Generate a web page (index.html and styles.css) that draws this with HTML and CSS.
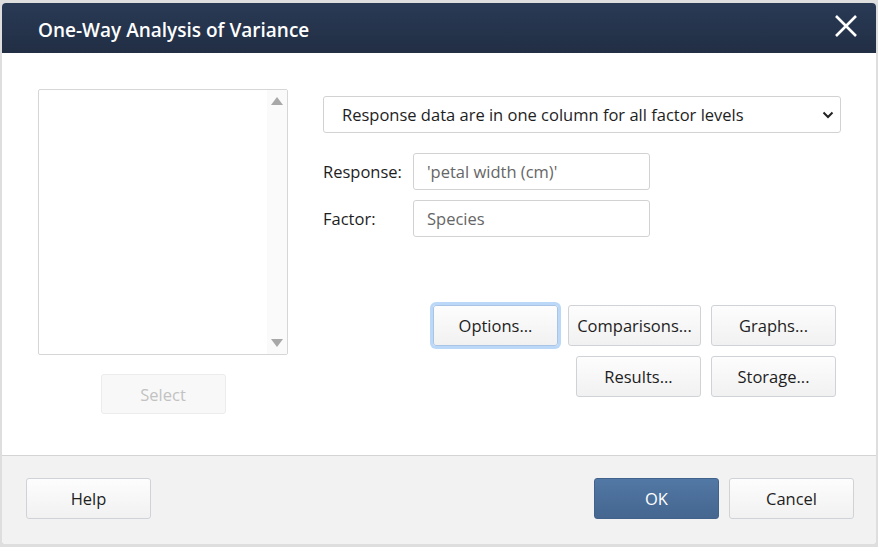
FILE: index.html
```html
<!DOCTYPE html>
<html>
<head>
<meta charset="utf-8">
<link rel="stylesheet" href="styles.css">
</head>
<body>
<div class="dialog">
  <div class="header">
    <div class="title">One-Way Analysis of Variance</div>
    <svg class="close" width="24" height="24" viewBox="0 0 24 24"><path d="M2 2 L22 22 M22 2 L2 22" stroke="#fff" stroke-width="2.6" fill="none"/></svg>
  </div>
  <div class="content">
    <div class="left">
      <div class="listbox">
        <div class="scroll">
          <svg width="14" height="10" viewBox="0 0 14 10"><path d="M7 1 L13 9 L1 9 Z" fill="#a8a8a8"/></svg>
          <svg width="14" height="10" viewBox="0 0 14 10"><path d="M1 1 L13 1 L7 9 Z" fill="#a8a8a8"/></svg>
        </div>
      </div>
      <div class="btn disabled select">Select</div>
    </div>
    <div class="right">
      <div class="dropdown">
        <span>Response data are in one column for all factor levels</span>
        <svg width="12" height="8" viewBox="0 0 12 8"><path d="M1.5 1.5 L6 6 L10.5 1.5" stroke="#222" stroke-width="2" fill="none"/></svg>
      </div>
      <div class="field">
        <label>Response:</label>
        <div class="input">'petal width (cm)'</div>
      </div>
      <div class="field">
        <label>Factor:</label>
        <div class="input">Species</div>
      </div>
      <div class="btnrows">
        <div class="btnrow">
          <div class="btn focused">Options...</div>
          <div class="btn wide">Comparisons...</div>
          <div class="btn">Graphs...</div>
        </div>
        <div class="btnrow">
          <div class="btn">Results...</div>
          <div class="btn">Storage...</div>
        </div>
      </div>
    </div>
  </div>
  <div class="footer">
    <div class="btn">Help</div>
    <div class="spacer"></div>
    <div class="btn primary">OK</div>
    <div class="btn">Cancel</div>
  </div>
</div>
</body>
</html>
```
FILE: styles.css
```css
html, body { margin: 0; padding: 0; }
body {
  background: #dedede;
  width: 878px;
  height: 547px;
  overflow: hidden;
  font-family: "Open Sans", "Noto Sans", sans-serif;
  color: #1e1e1e;
}
.dialog {
  margin: 3px 2px 0 2px;
  width: 874px;
  height: 541px;
  border-radius: 4px;
  overflow: hidden;
  display: flex;
  flex-direction: column;
  background: #fff;
}
.header {
  height: 50px;
  flex: none;
  box-sizing: border-box;
  background: linear-gradient(#2a3a55, #212e44);
  display: flex;
  align-items: center;
  padding: 3px 18px 0 36px;
}
.title {
  color: #fff;
  font-size: 19px;
  font-weight: 600;
  flex: 1;
}
.close { margin-top: -8px; }
.content {
  flex: 1;
  display: flex;
  gap: 35px;
  padding: 36px 35px 0 36px;
}
.left { width: 250px; display: flex; flex-direction: column; align-items: center; }
.listbox {
  width: 250px;
  height: 266px;
  box-sizing: border-box;
  border: 1px solid #d6d6d6;
  border-radius: 2px;
  display: flex;
  justify-content: flex-end;
}
.scroll {
  width: 20px;
  background: #fafafa;
  display: flex;
  flex-direction: column;
  justify-content: space-between;
  align-items: center;
  padding: 6px 0 6px;
}
.btn {
  box-sizing: border-box;
  width: 125px;
  height: 41px;
  border: 1px solid #cfd3d8;
  border-radius: 3px;
  background: linear-gradient(#fdfdfd, #f1f1f1);
  display: flex;
  align-items: center;
  justify-content: center;
  font-size: 16.5px;
  color: #1e1e1e;
}
.select {
  margin-top: 19px;
  height: 40px;
  background: #f8f8f8;
  border-color: #ececec;
  color: #c2c2c2;
}
.right { flex: 1; padding-top: 7px; display: flex; flex-direction: column; }
.dropdown {
  height: 37px;
  box-sizing: border-box;
  border: 1px solid #d2d2d2;
  border-radius: 3px;
  display: flex;
  align-items: center;
  padding: 0 6px 0 18px;
  font-size: 16.5px;
  margin-bottom: 20px;
}
.dropdown span { flex: 1; }
.field { display: flex; align-items: center; margin-bottom: 10px; }
.field label { width: 90px; font-size: 16.5px; }
.input {
  width: 237px;
  height: 37px;
  box-sizing: border-box;
  border: 1px solid #d2d2d2;
  border-radius: 3px;
  display: flex;
  align-items: center;
  padding-left: 13px;
  color: #666;
  font-size: 16.5px;
}
.btnrows {
  margin-top: 58px;
  margin-right: 5px;
  display: flex;
  flex-direction: column;
  gap: 10px;
  align-items: flex-end;
}
.btnrow { display: flex; gap: 10px; }
.btnrow .btn { height: 41px; }
.btnrow .btn.wide { width: 133px; }
.btn.focused {
  box-shadow: 0 0 0 3px #bcd8f8;
  border-color: #a9c4e4;
}
.footer {
  height: 89px;
  flex: none;
  box-sizing: border-box;
  border-top: 1px solid #d4d4d4;
  background: #f2f2f2;
  display: flex;
  align-items: flex-start;
  padding: 22px 22px 0 24px;
  gap: 10px;
}
.spacer { flex: 1; }
.primary {
  background: linear-gradient(#5278a5, #44668f);
  border-color: #41628b;
  color: #fff;
}
```
